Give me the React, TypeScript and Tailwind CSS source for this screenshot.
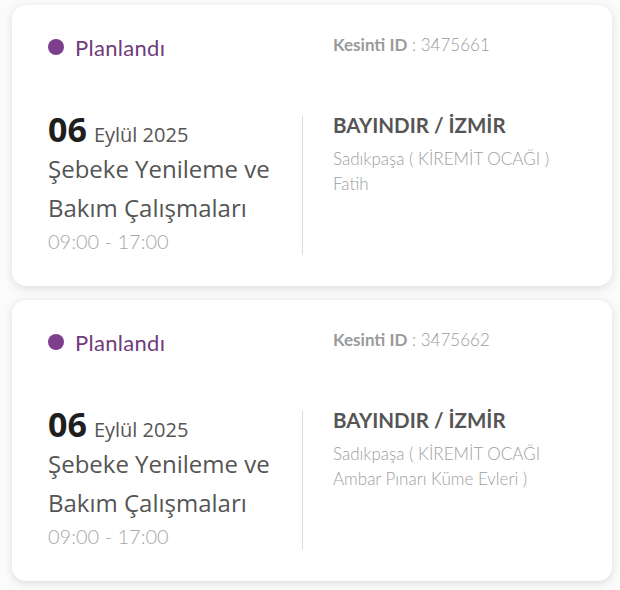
import React from 'react'

const outages = [
  { id: '3475661', mahalle: 'Sadıkpaşa ( KİREMİT OCAĞI )', sokak: 'Fatih' },
  { id: '3475662', mahalle: 'Sadıkpaşa ( KİREMİT OCAĞI', sokak: 'Ambar Pınarı Küme Evleri )' },
]

const Card = ({ id, mahalle, sokak }: { id: string; mahalle: string; sokak: string }) => {
  return (
    <div className="w-[600px] h-[281px] bg-white rounded-[14px] shadow-[0_2px_10px_rgba(0,0,0,0.13)] pl-[36px] pt-[23px]">
      <div className="grid grid-cols-[254px_1fr] font-['Lato',sans-serif]">
        <div className="flex items-center gap-[11px] h-[38px]">
          <span className="w-[16px] h-[16px] rounded-full bg-[#7e3e8e]" />
          <span className="text-[22px] text-[#6f3b7a] tracking-[0.3px]">Planlandı</span>
        </div>
        <div className="pl-[31px] pt-[3px] text-[17px] text-[#9a9a9a] leading-[28px]">
          <span className="font-bold">Kesinti ID</span>
          <span className="font-light"> : {id}</span>
        </div>
      </div>

      <div className="flex mt-[46px]">
        <div className="w-[254px] font-['Open_Sans',sans-serif]">
          <div className="flex items-baseline gap-[7px] h-[34px]">
            <span className="text-[34px] font-bold text-[#1f1f1f] leading-[34px] font-['Noto_Sans',sans-serif]">06</span>
            <span className="text-[20px] text-[#555]">Eylül 2025</span>
          </div>
          <div className="text-[24px] leading-[39px] text-[#555] mt-[3px]">
            Şebeke Yenileme ve
            <br />
            Bakım Çalışmaları
          </div>
          <div className="text-[20px] font-light text-[#a8a8a8] font-['Lato',sans-serif] leading-[28px]">
            09:00 - 17:00
          </div>
        </div>
        <div className="w-px h-[139px] mt-[4px] bg-[#dcdcdc]" />
        <div className="pl-[30px] mt-[2px] font-['Lato',sans-serif]">
          <div className="text-[20.5px] font-bold text-[#555] leading-[22px]">BAYINDIR / İZMİR</div>
          <div className="text-[17px] font-light text-[#9e9e9e] leading-[25px] mt-[10px]">
            {mahalle}
            <br />
            {sokak}
          </div>
        </div>
      </div>
    </div>
  )
}

export default function App() {
  return (
    <div className="w-[620px] h-[590px] bg-[#fbfbfb] pl-[12px] pt-[5px] flex flex-col gap-[14px]">
      {outages.map((o) => (
        <Card key={o.id} {...o} />
      ))}
    </div>
  )
}
